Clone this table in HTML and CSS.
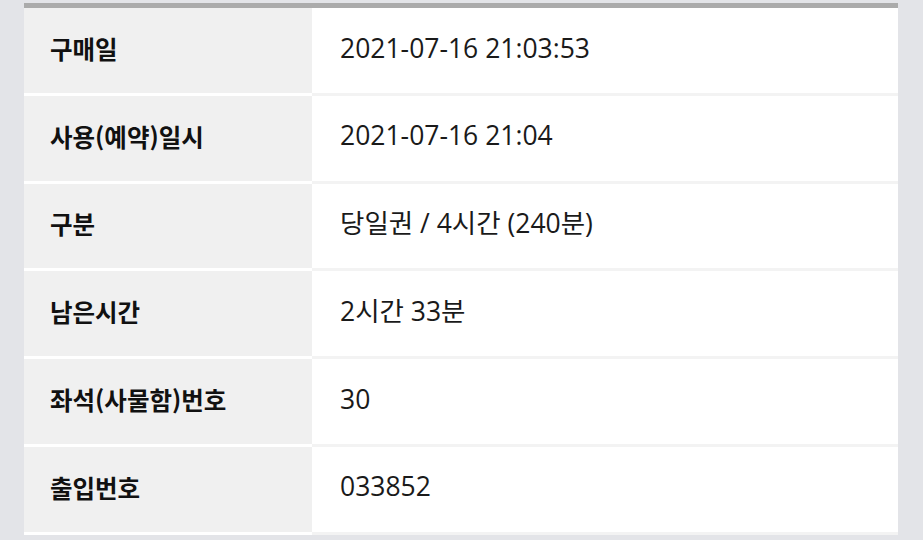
FILE: index.html
```html
<!DOCTYPE html>
<html lang="ko">
<head>
<meta charset="utf-8">
<link rel="stylesheet" href="styles.css">
</head>
<body>
<div class="page">
  <table class="info">
    <tbody>
      <tr><th>구매일</th><td>2021-07-16 21:03:53</td></tr>
      <tr><th>사용(예약)일시</th><td>2021-07-16 21:04</td></tr>
      <tr><th>구분</th><td>당일권 / 4시간 (240분)</td></tr>
      <tr><th>남은시간</th><td>2시간 33분</td></tr>
      <tr><th>좌석(사물함)번호</th><td>30</td></tr>
      <tr><th>출입번호</th><td>033852</td></tr>
    </tbody>
  </table>
</div>
</body>
</html>
```

FILE: styles.css
```css
html, body {
  margin: 0;
  padding: 0;
  background: #e3e4e8;
}
.page {
  padding: 3px 25px 0 24px;
}
.info {
  width: 100%;
  border-collapse: separate;
  border-spacing: 0;
  border-top: 5px solid #ababab;
  color: #1a1a1a;
}
.info th,
.info td {
  height: 87.8px;
  padding: 0 0 4px;
  box-sizing: border-box;
  vertical-align: middle;
  text-align: left;
  border-bottom: 3px solid #f3f3f3;
  line-height: 1.2;
}
.info th {
  width: 288px;
  padding-left: 26px;
  background: #f0f0f0;
  border-bottom-color: #ffffff;
  font-family: "Noto Sans CJK KR", "Noto Sans", sans-serif;
  font-size: 24.5px;
  font-weight: 700;
  color: #111;
}
.info td {
  padding-left: 28px;
  background: #ffffff;
  font-family: "Open Sans", "Noto Sans CJK KR", sans-serif;
  font-size: 26.5px;
  font-weight: 400;
}
```
